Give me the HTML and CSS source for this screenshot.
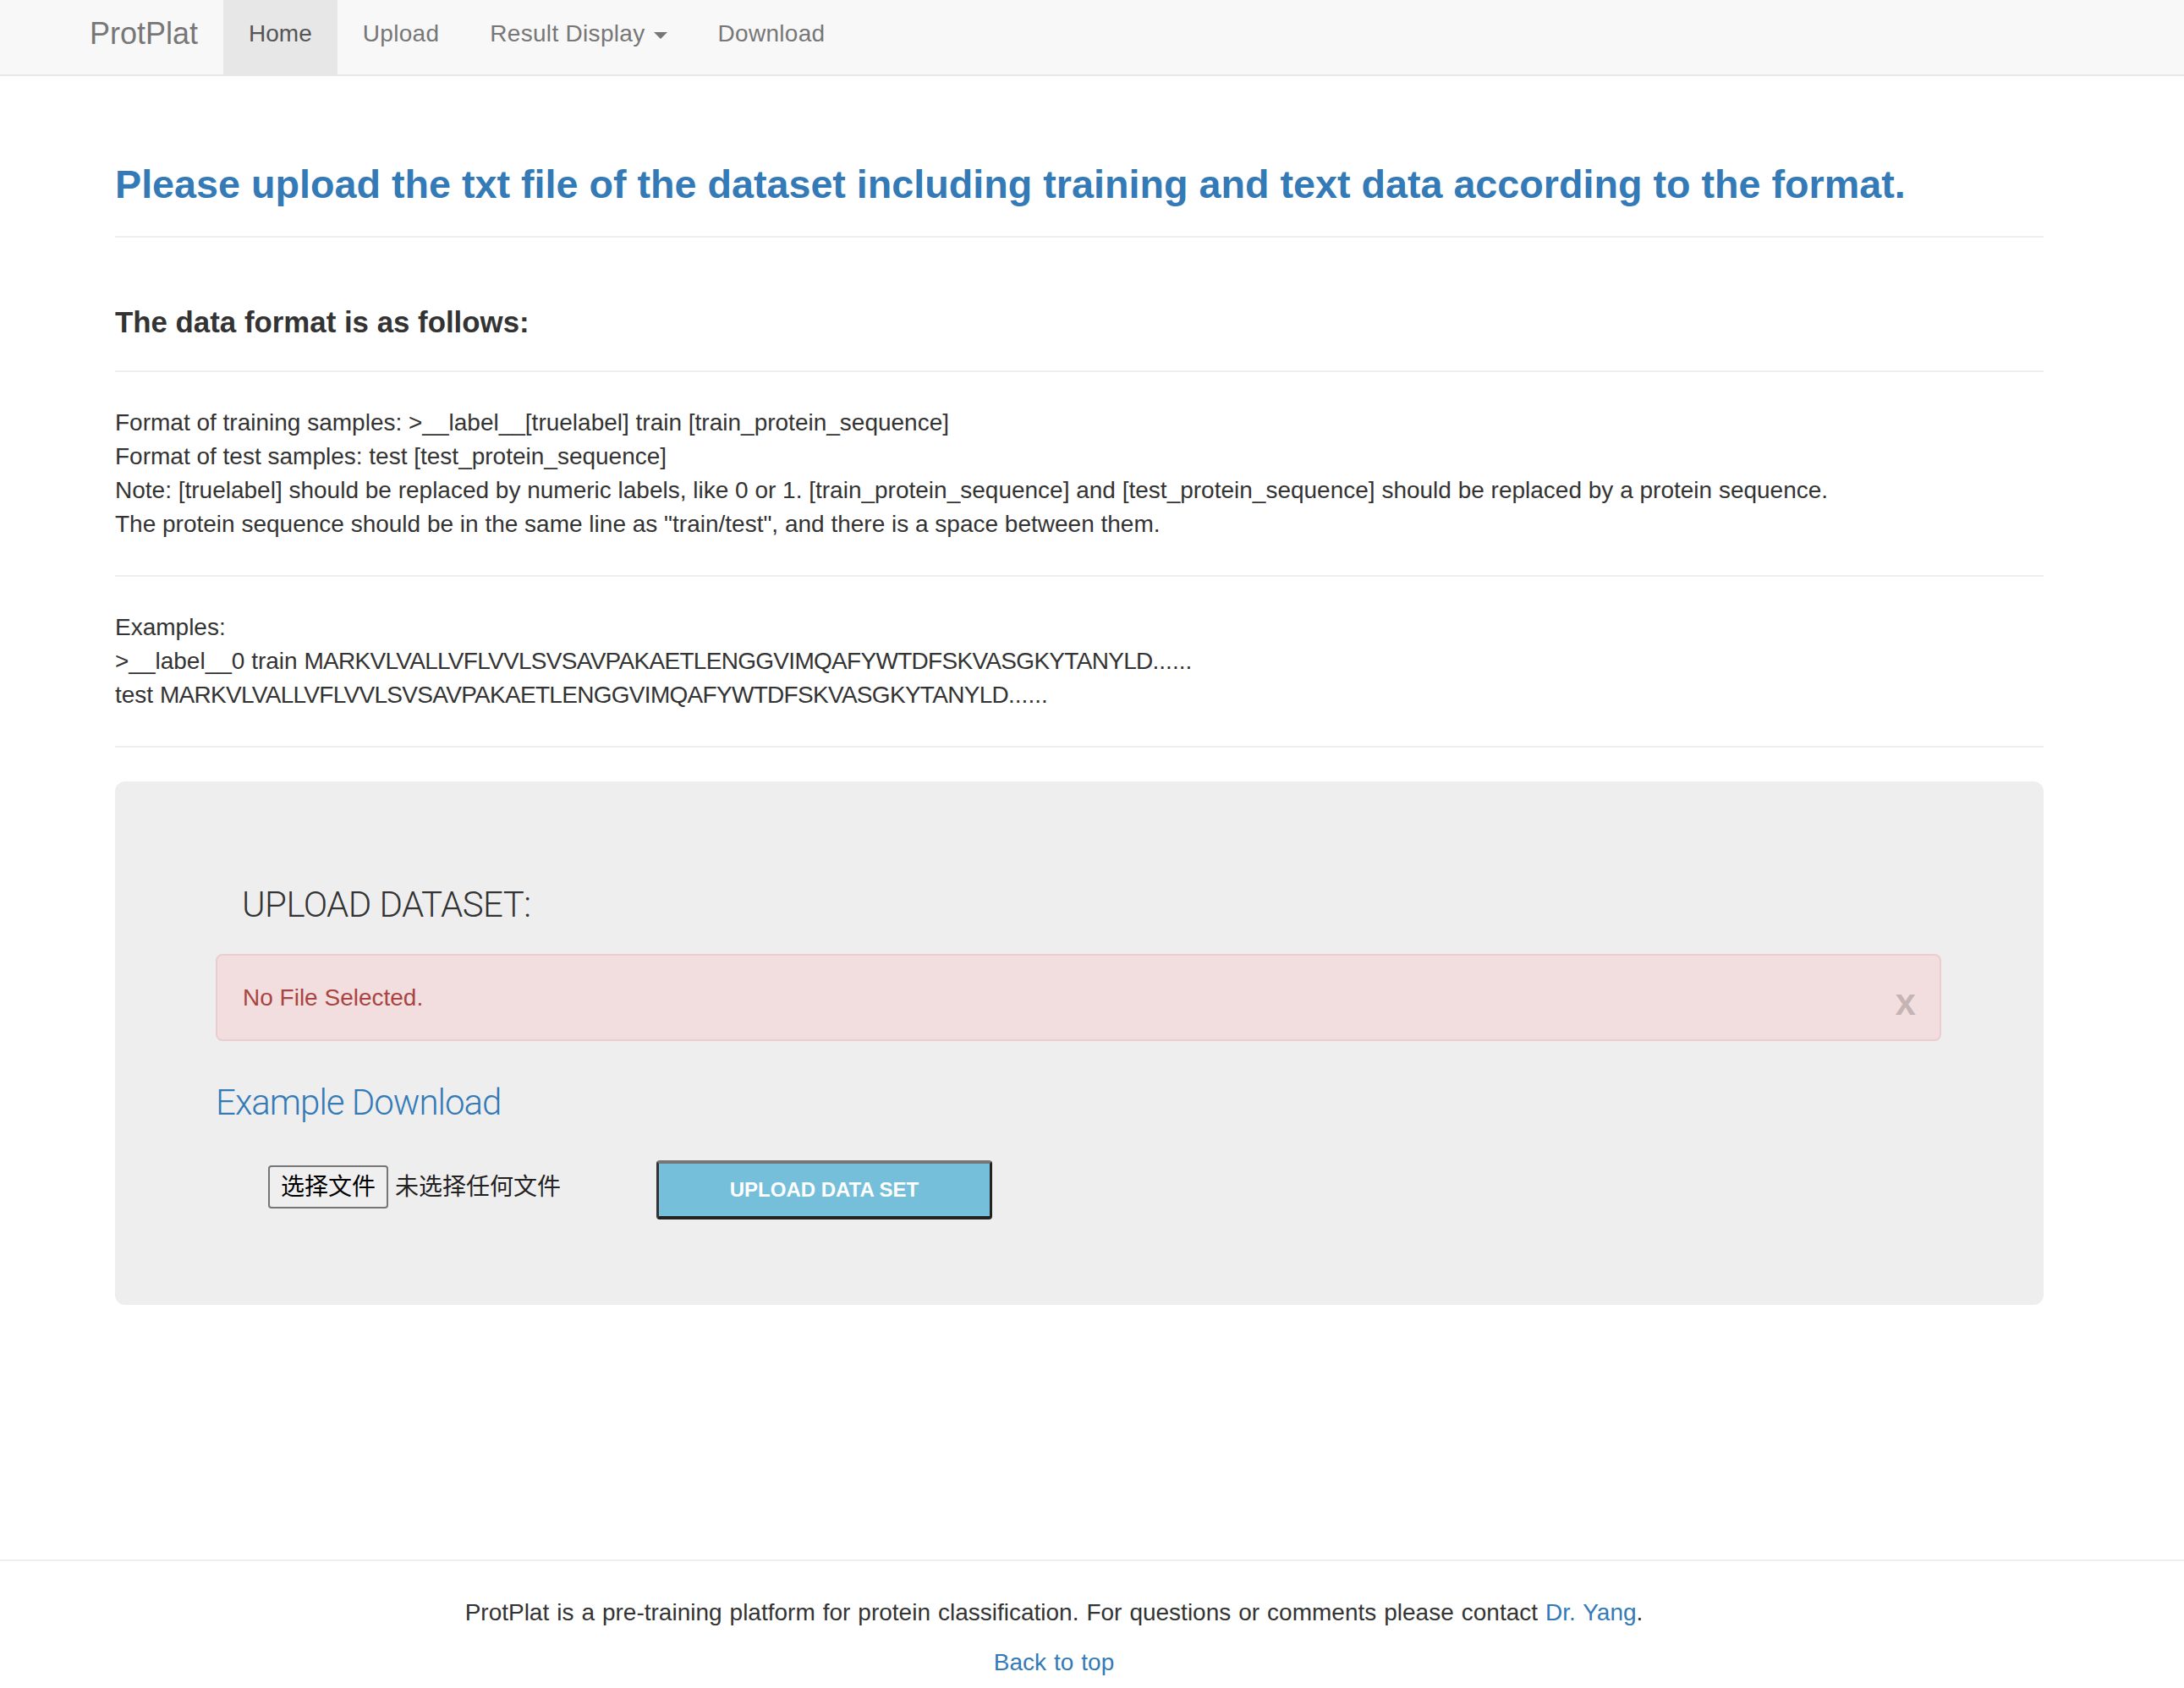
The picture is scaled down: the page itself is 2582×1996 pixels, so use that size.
FILE: index.html
```html
<!DOCTYPE html>
<html lang="en">
<head>
<meta charset="utf-8">
<title>ProtPlat - Upload</title>
<link rel="stylesheet" href="styles.css">
</head>
<body>
<nav class="navbar">
  <div class="nav-inner">
    <a class="brand" href="#">ProtPlat</a>
    <ul class="nav">
      <li class="active"><a href="#">Home</a></li>
      <li><a href="#">Upload</a></li>
      <li><a href="#">Result Display <span class="caret"></span></a></li>
      <li><a href="#">Download</a></li>
    </ul>
  </div>
</nav>
<main class="container">
  <div class="page-header">
    <h1 class="title">Please upload the txt file of the dataset including training and text data according to the format.</h1>
  </div>
  <div class="sub-header">
    <h2 class="subtitle">The data format is as follows:</h2>
  </div>
  <p class="desc">Format of training samples: &gt;__label__[truelabel] train [train_protein_sequence]<br>Format of test samples: test [test_protein_sequence]<br>Note: [truelabel] should be replaced by numeric labels, like 0 or 1. [train_protein_sequence] and [test_protein_sequence] should be replaced by a protein sequence.<br>The protein sequence should be in the same line as "train/test", and there is a space between them.</p>
  <hr class="rule">
  <p class="desc">Examples:<br>&gt;__label__0 train <span class="seq">MARKVLVALLVFLVVLSVSAVPAKAETLENGGVIMQAFYWTDFSKVASGKYTANYLD</span>......<br>test <span class="seq">MARKVLVALLVFLVVLSVSAVPAKAETLENGGVIMQAFYWTDFSKVASGKYTANYLD</span>......</p>
  <hr class="rule">
  <section class="jumbotron">
    <h3 class="lead-title">UPLOAD DATASET:</h3>
    <div class="alert">
      <span class="alert-text">No File Selected.</span>
      <span class="close">x</span>
    </div>
    <a class="example" href="#">Example Download</a>
    <div class="upload-row">
      <div class="file-input">
        <span class="file-btn">选择文件</span>
        <span class="file-name">未选择任何文件</span>
      </div>
      <button class="upload-btn" type="button">UPLOAD DATA SET</button>
    </div>
  </section>
</main>
<footer class="footer">
  <p class="foot-line">ProtPlat is a pre-training platform for protein classification. For questions or comments please contact <a href="#">Dr. Yang</a>.</p>
  <p class="foot-line"><a href="#">Back to top</a></p>
</footer>
</body>
</html>
```

FILE: styles.css
```css
html, body {
  margin: 0;
  padding: 0;
  background: #fff;
}
body {
  font-family: "Liberation Sans", Arial, sans-serif;
  font-size: 28px;
  line-height: 40px;
  color: #333;
}
a {
  color: #337ab7;
  text-decoration: none;
}

/* navbar */
.navbar {
  height: 88px;
  background: #f8f8f8;
  border-bottom: 2px solid #e7e7e7;
}
.nav-inner {
  display: flex;
  padding-left: 76px;
  height: 88px;
}
.brand {
  display: block;
  box-sizing: border-box;
  height: 88px;
  padding: 20px 30px 0;
  font-size: 36px;
  line-height: 40px;
  color: #777;
}
.nav {
  display: flex;
  margin: 0;
  padding: 0;
  list-style: none;
}
.nav a {
  display: block;
  box-sizing: border-box;
  height: 88px;
  padding: 20px 30px 0;
  font-size: 28px;
  line-height: 40px;
  color: #777;
  letter-spacing: 0.3px;
}
.nav .active a {
  background: #e7e7e7;
  color: #555;
  letter-spacing: 0;
}
.caret {
  display: inline-block;
  width: 0;
  height: 0;
  margin-left: 2px;
  vertical-align: middle;
  border-top: 8px solid #777;
  border-left: 8px solid transparent;
  border-right: 8px solid transparent;
}

/* main */
.container {
  padding: 0 166px 0 136px;
}
.page-header {
  padding: 102px 0 35px;
  border-bottom: 2px solid #eee;
}
.title {
  margin: 0;
  font-size: 46.7px;
  line-height: 52px;
  font-weight: bold;
  color: #337ab7;
  white-space: nowrap;
}
.sub-header {
  padding: 80px 0 37px;
  border-bottom: 2px solid #eee;
}
.subtitle {
  margin: 0;
  font-size: 34.85px;
  line-height: 40px;
  font-weight: bold;
  color: #333;
}
.desc {
  margin: 40px 0 0;
}
.seq {
  letter-spacing: -0.7px;
}
.rule {
  margin: 40px 0;
  height: 0;
  border: 0;
  border-top: 2px solid #eee;
}

/* jumbotron */
.jumbotron {
  background: #eee;
  border-radius: 12px;
  padding: 117px 121px 101px 119px;
}
.lead-title {
  margin: 0;
  padding-left: 31px;
  font-family: Roboto, "Liberation Sans", sans-serif;
  font-weight: 300;
  font-size: 42px;
  line-height: 58px;
  letter-spacing: -0.55px;
  color: #333;
}
.alert {
  margin-top: 29px;
  display: flex;
  justify-content: space-between;
  align-items: flex-start;
  padding: 30px 28px 29px 30px;
  background: #f2dede;
  border: 2px solid #ebccd1;
  border-radius: 8px;
  color: #a94442;
}
.close {
  font-size: 44px;
  font-weight: bold;
  line-height: 40px;
  padding-top: 5px;
  margin-bottom: -5px;
  color: rgba(0, 0, 0, 0.2);
}
.example {
  display: block;
  margin-top: 44px;
  font-family: Roboto, "Liberation Sans", sans-serif;
  font-weight: 300;
  font-size: 42px;
  line-height: 58px;
  letter-spacing: -1px;
  color: #337ab7;
}
.upload-row {
  display: flex;
  align-items: flex-start;
  margin-top: 39px;
  padding-left: 62px;
}
.file-input {
  width: 459px;
  display: flex;
  align-items: center;
  gap: 8px;
  margin-top: 6px;
  font-family: "Liberation Sans", "Noto Sans CJK SC", sans-serif;
}
.file-btn {
  box-sizing: border-box;
  height: 51px;
  padding: 0 13px;
  border: 2px solid #767676;
  border-radius: 4px;
  background: #efefef;
  color: #000;
  font-size: 28px;
  line-height: 47px;
}
.file-name {
  font-size: 28px;
  line-height: 47px;
  color: #222;
}
.upload-btn {
  box-sizing: border-box;
  width: 397px;
  height: 70px;
  padding: 0;
  background: #76bfdb;
  color: #fff;
  font-family: "Liberation Sans", Arial, sans-serif;
  font-size: 24px;
  font-weight: bold;
  border-style: solid;
  border-width: 4px 3px 4px 3px;
  border-color: #767676 #222 #222 #333;
  border-radius: 4px;
}

/* footer */
.footer {
  margin-top: 301px;
  border-top: 2px solid #eee;
  padding: 41px 226px 0 136px;
  text-align: center;
}
.foot-line {
  margin: 0 0 19px;
  word-spacing: 1.2px;
}
```
